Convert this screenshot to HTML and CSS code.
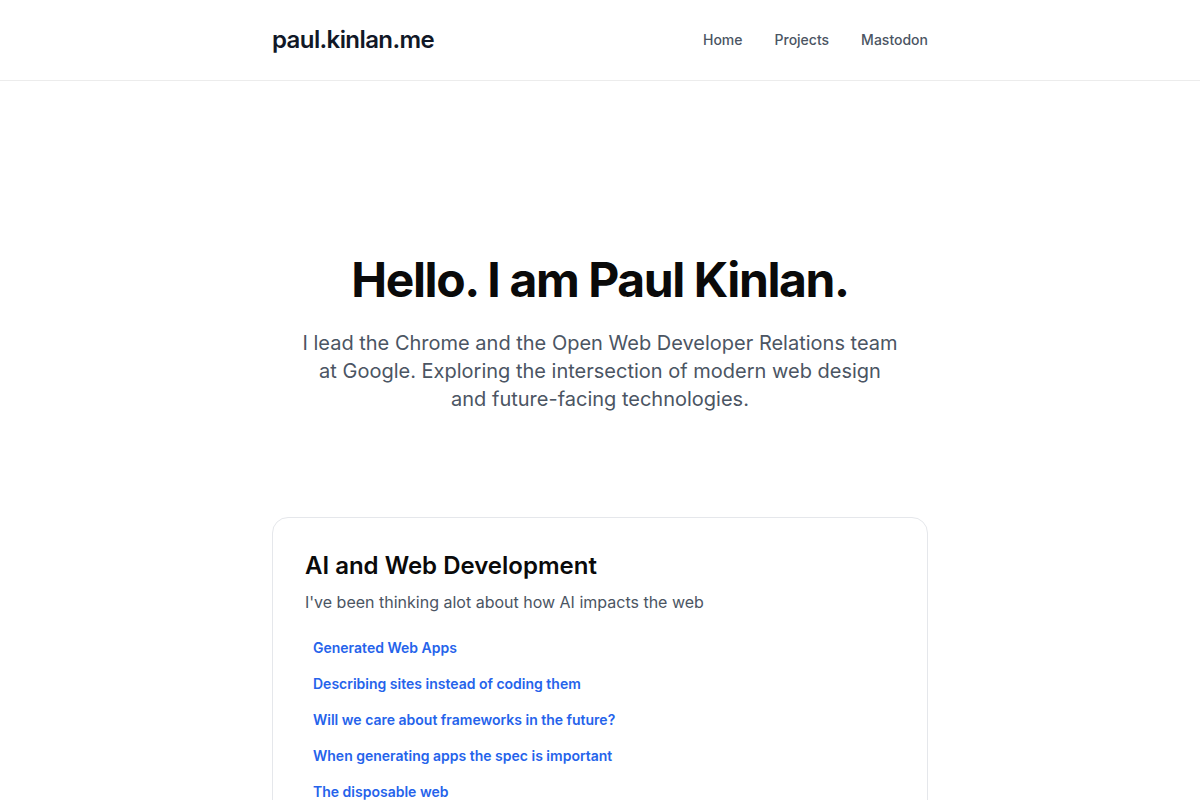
FILE: index.html
```html
<!DOCTYPE html>
<html lang="en">
<head>
<meta charset="utf-8">
<title>paul.kinlan.me</title>
<link rel="stylesheet" href="styles.css">
</head>
<body>
<header class="site-header">
  <div class="container header-inner">
    <a class="logo" href="#">paul.kinlan.me</a>
    <nav class="nav">
      <a href="#">Home</a>
      <a href="#">Projects</a>
      <a href="#">Mastodon</a>
    </nav>
  </div>
</header>
<main>
  <section class="hero">
    <h1>Hello. I am Paul Kinlan.</h1>
    <p>I lead the Chrome and the Open Web Developer Relations team at Google. Exploring the intersection of modern web design and future-facing technologies.</p>
  </section>
  <div class="container">
    <section class="card">
      <h2>AI and Web Development</h2>
      <p class="card-sub">I've been thinking alot about how AI impacts the web</p>
      <ul class="links">
        <li><a href="#">Generated Web Apps</a></li>
        <li><a href="#">Describing sites instead of coding them</a></li>
        <li><a href="#">Will we care about frameworks in the future?</a></li>
        <li><a href="#">When generating apps the spec is important</a></li>
        <li><a href="#">The disposable web</a></li>
      </ul>
    </section>
  </div>
</main>
</body>
</html>
```
FILE: styles.css
```css
* { box-sizing: border-box; }
html, body { margin: 0; padding: 0; }
body {
  font-family: Inter, "Noto Sans", sans-serif;
  color: #111;
  background: #fff;
}
a { text-decoration: none; }
.container {
  width: 656px;
  margin: 0 auto;
}
.site-header {
  height: 81px;
  border-bottom: 1px solid #ececec;
}
.header-inner {
  height: 80px;
  display: flex;
  align-items: center;
  justify-content: space-between;
  padding-bottom: 1px;
}
.logo {
  font-size: 24px;
  font-weight: 600;
  color: #111827;
  letter-spacing: -0.6px;
}
.nav {
  display: flex;
  gap: 32px;
}
.nav a {
  font-size: 14px;
  font-weight: 500;
  color: #4b5563;
}
.hero {
  text-align: center;
  padding: 175px 0 104px;
}
.hero h1 {
  margin: 0;
  font-size: 48px;
  line-height: 48px;
  font-weight: 700;
  letter-spacing: -1.4px;
  color: #0a0a0a;
}
.hero p {
  margin: 25px auto 0;
  max-width: 600px;
  font-size: 20px;
  line-height: 28px;
  color: #4b5563;
}
.card {
  border: 1px solid #e5e7eb;
  border-radius: 16px;
  padding: 32px 32px 32px;
}
.card h2 {
  margin: 0;
  font-size: 24px;
  line-height: 32px;
  font-weight: 600;
  color: #0a0a0a;
}
.card-sub {
  margin: 8px 0 0;
  font-size: 16px;
  line-height: 24px;
  color: #4b5563;
}
.links {
  list-style: none;
  margin: 16px 0 0;
  padding: 0;
}
.links li a {
  display: block;
  padding: 8px 8px;
  font-size: 14px;
  line-height: 20px;
  font-weight: 600;
  color: #2563eb;
}
```
